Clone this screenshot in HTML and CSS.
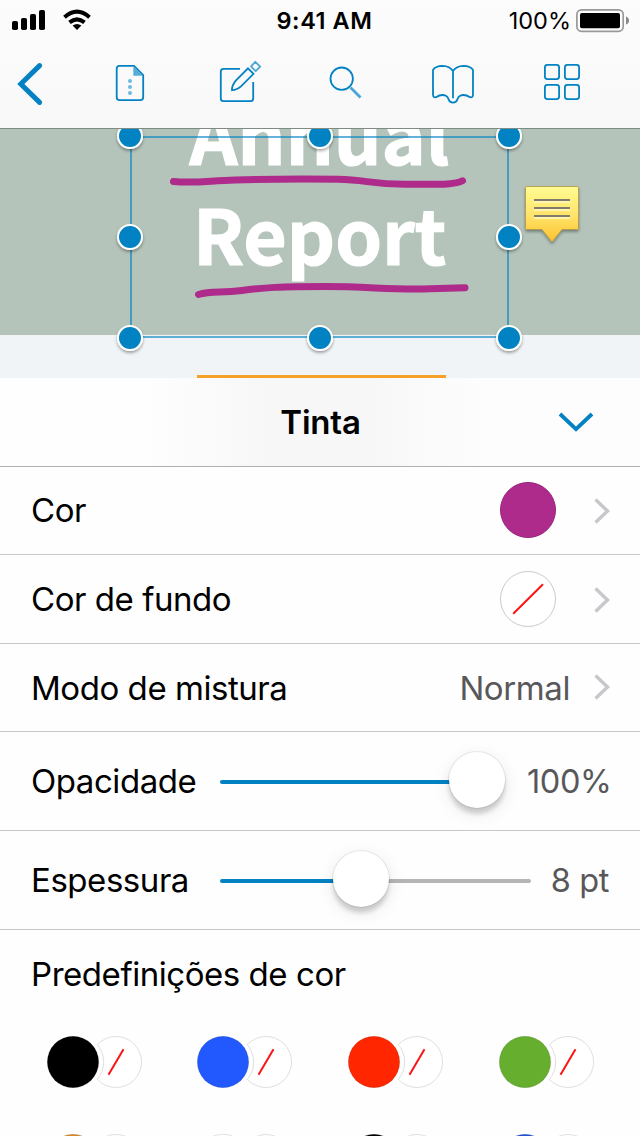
FILE: index.html
```html
<!DOCTYPE html>
<html lang="pt">
<head>
<meta charset="utf-8">
<title>Annual Report</title>
<link rel="stylesheet" href="styles.css">
</head>
<body>
<div class="screen">
  <header class="topbar">
    <div class="status">
      <div class="signal">
        <svg width="80" height="22" viewBox="12 9 80 22">
          <rect x="12" y="21" width="6" height="9" rx="1.8"/><rect x="21" y="18" width="6" height="12" rx="1.8"/><rect x="30" y="14" width="6" height="16" rx="1.8"/><rect x="39" y="10" width="6" height="20" rx="1.8"/>
          <path class="wifi-arc" d="M64.500 17.200Q77 6.200 89.500 17.200"/><path class="wifi-arc" d="M69.500 22.400Q77 16.400 84.500 22.400"/><path d="M72.600 25.500Q77 22.300 81.400 25.500L77 30Z"/>
        </svg>
      </div>
      <span class="time">9:41 AM</span>
      <div class="battery"><span class="charge">100%</span>
        <svg width="54" height="24" viewBox="576 9 54 24"><rect x="576.900" y="9.900" width="46.300" height="21.400" rx="4.500" fill="none" stroke="#999" stroke-width="1.700"/><rect x="580" y="13" width="40" height="15.300" rx="2"/><path d="M626 16.500Q629 17.500 629 20.500T626 24.500Z" fill="#888"/></svg>
      </div>
    </div>
    <nav class="tools">
      <svg class="tool" width="44" height="50" viewBox="8 58 44 50"><path d="M39.600 65.600L20.800 84L39.600 102.400" stroke-width="5" stroke-linecap="round"/></svg>
      <svg class="tool" width="44" height="50" viewBox="108 58 44 50"><path d="M119.500 65.800H134L143.200 75V97.300Q143.200 100.200 140.200 100.200H119.500Q116.700 100.200 116.700 97.300V68.700Q116.700 65.800 119.500 65.800Z"/><path d="M133.300 66V75.800H143.200Z" class="soft-fill fold"/><circle cx="130" cy="81" r="2" class="dot"/><circle cx="130" cy="87" r="2" class="dot"/><circle cx="130" cy="93" r="2" class="dot"/></svg>
      <svg class="tool" width="44" height="50" viewBox="219 58 44 50"><path d="M240 68.800H223.500Q220.800 68.800 220.800 71.500V98.500Q220.800 101.200 223.500 101.200H250.500Q253.200 101.200 253.200 98.500V82"/><path d="M248 68.300L253.500 73.800L241.500 85.800Q237 90 232 90.200Q231.600 85.500 236 80.300Z"/><path d="M251 66.300L255.300 61.800L260.200 66.600L255.700 71.200Z" class="soft" stroke-linejoin="round"/></svg>
      <svg class="tool" width="44" height="50" viewBox="323 58 44 50"><circle cx="341.700" cy="78.700" r="11.200"/><path d="M350.500 87.500L360.500 97.400" class="soft handle"/></svg>
      <svg class="tool" width="44" height="50" viewBox="431 58 44 50"><path d="M453 98.300V71Q449.700 66 442.500 65.800Q435.500 65.800 433 70V94.500Q433 97.800 436 97.200Q441.500 93.700 446 95.800C450 97.500 447 102.500 453 102.700C459 102.500 456 97.500 460 95.800Q464.500 93.700 470 97.200Q473 97.800 473 94.500V70Q470.500 65.800 463.500 65.800Q456.300 66 453 71"/></svg>
      <svg class="tool" width="44" height="50" viewBox="540 58 44 50"><rect x="544.900" y="64.900" width="14.200" height="14.200" rx="2.500"/><rect x="564.900" y="64.900" width="14.200" height="14.200" rx="2.500"/><rect x="544.900" y="84.900" width="14.200" height="14.200" rx="2.500"/><rect x="564.900" y="84.900" width="14.200" height="14.200" rx="2.500"/></svg>
    </nav>
  </header>

  <main class="document">
    <div class="cover"></div>
    <span class="title title-annual">Annual</span>
    <span class="title title-report">Report</span>
    <svg class="canvas" width="640" height="249" viewBox="0 129 640 249">
      <defs>
        <linearGradient id="note" x2="0" y2="1"><stop stop-color="#fffb91"/><stop offset=".5" stop-color="#ffe56c"/><stop offset="1" stop-color="#fdc12e"/></linearGradient>
        <filter id="shadow" x="-30%" y="-30%" width="160%" height="170%"><feDropShadow dx="0" dy="2" stdDeviation="1.500" flood-opacity=".35"/></filter>
      </defs>
      <path class="ink" d="M173.500 181.500C195 183.500 210 180.500 235 179.900S310 179 338 179.300S370 184.300 405 184.300S455 185 462.500 180.800"/>
      <path class="ink" d="M198.500 294.500C212 290 220 293.500 242 290.500S280 286.500 325 286.500S390 290 430 288.800L465 287.700"/>
      <path class="frame-halo" d="M131 335.400H508"/>
      <rect class="frame" x="131" y="137" width="377" height="200"/>
      <g class="handles" filter="url(#shadow)"><circle cx="130" cy="136" r="12"/><circle cx="320" cy="136" r="12"/><circle cx="509" cy="136" r="12"/><circle cx="130" cy="237" r="12"/><circle cx="509" cy="237" r="12"/><circle cx="130" cy="338" r="12"/><circle cx="320" cy="338" r="12"/><circle cx="509" cy="338" r="12"/></g>
      <path filter="url(#shadow)" d="M526.500 186.500H577.500Q578.500 186.500 578.500 187.500V228.500Q578.500 229.500 577.500 229.500H562L552 242L542 229.500H526.500Q525.500 229.500 525.500 228.500V187.500Q525.500 186.500 526.500 186.500Z" fill="url(#note)" stroke="#a99443" stroke-width=".8"/>
      <path d="M534 202H570M534 210H570M534 218H570" stroke="#fff4b0" stroke-width="2"/>
      <path d="M534 200H570M534 208H570M534 216H570" stroke="#807c69" stroke-width="2"/>
    </svg>
    <div class="tab-marker"></div>
  </main>

  <section class="inspector">
    <div class="panel-head"><h1>Tinta</h1>
      <svg class="collapse" width="36" height="22" viewBox="558 411 36 22"><path d="M560 414L576 429.200L592 414"/></svg>
    </div>
    <div class="row row-color"><span class="label">Cor</span><i class="well"></i><svg class="chevron" width="18" height="28" viewBox="0 0 18 28"><path d="M2.500 2.500L14.500 14L2.500 25.500"/></svg></div>
    <div class="row row-fill"><span class="label">Cor de fundo</span><svg class="well-empty" width="56" height="56" viewBox="0 0 56 56"><circle cx="28" cy="28" r="27.500"/><path d="M13.200 42.800L43 13.200"/></svg><svg class="chevron" width="18" height="28" viewBox="0 0 18 28"><path d="M2.500 2.500L14.500 14L2.500 25.500"/></svg></div>
    <div class="row row-blend"><span class="label">Modo de mistura</span><span class="value">Normal</span><svg class="chevron" width="18" height="28" viewBox="0 0 18 28"><path d="M2.500 2.500L14.500 14L2.500 25.500"/></svg></div>
    <div class="row slider-row"><span class="label">Opacidade</span><div class="slider opacity"><i class="track"></i><b class="thumb"></b></div><span class="value percent">100%</span></div>
    <div class="row slider-row"><span class="label">Espessura</span><div class="slider thickness"><i class="track"></i><b class="thumb"></b></div><span class="value points">8 pt</span></div>
    <h2 class="label presets-title">Predefinições de cor</h2>
    <svg width="0" height="0" class="symbols"><symbol id="none" viewBox="0 0 96 52"><path d="M50.300 8.700A25.500 25.500 0 1 1 50.300 43.300A26.500 26.500 0 0 0 50.300 8.700Z" fill="#fff" stroke="#c9c9cb"/><path d="M61.500 38.800L76.500 13.200" stroke="#fa1414" stroke-width="2"/></symbol></svg>
    <div class="presets">
      <svg class="preset black"><use href="#none"/><circle cx="26" cy="26" r="25.700"/></svg>
      <svg class="preset blue"><use href="#none"/><circle cx="26" cy="26" r="25.700"/></svg>
      <svg class="preset red"><use href="#none"/><circle cx="26" cy="26" r="25.700"/></svg>
      <svg class="preset green"><use href="#none"/><circle cx="26" cy="26" r="25.700"/></svg>
      <svg class="preset orange"><use href="#none"/><circle cx="26" cy="26" r="25.700"/></svg>
      <svg class="preset white"><use href="#none"/><circle cx="26" cy="26" r="25.700"/></svg>
      <svg class="preset black"><use href="#none"/><circle cx="26" cy="26" r="25.700"/></svg>
      <svg class="preset navy"><use href="#none"/><circle cx="26" cy="26" r="25.700"/></svg>
    </div>
  </section>
</div>
</body>
</html>
```
FILE: styles.css
```css
* { box-sizing: border-box; }
body { margin: 0; font-family: Inter, "Liberation Sans", sans-serif; color: #000; }
svg { display: block; flex: none; }
.screen { width: 640px; height: 1136px; overflow: hidden; background: #fefefe; display: flex; flex-direction: column; }
.topbar { flex: none; height: 129px; border-bottom: 1px solid #7d8b82; background: linear-gradient(#fcfcfc, #f8f8f8); }
.status { height: 40px; display: grid; grid-template-columns: 265px 119px 1fr; align-items: center; }
.signal { padding-left: 12px; }
.wifi-arc { fill: none; stroke: #000; stroke-width: 4; }
.time { text-align: center; font-size: 23.5px; font-weight: 600; letter-spacing: .55px; white-space: nowrap; }
.battery { display: flex; justify-content: flex-end; align-items: center; gap: 6px; padding-right: 10px; margin-top: 2px; }
.charge { font-size: 23.5px; margin-top: -1px; margin-right: -1px; }
.tools { height: 88px; display: grid; grid-template-columns: 60px 140px 82px 126px 90px 128px; justify-items: center; padding-top: 18px; }
.tool { fill: none; stroke: #0382c3; stroke-width: 1.8; }
.soft { stroke: #4aa6d6; }
.handle { stroke-width: 2.8; }
.soft-fill { fill: #5aacd8; }
.fold { stroke: none; }
.dot { fill: #70b9df; stroke: none; }
.document { position: relative; flex: none; height: 249px; background: #f0f4f6; overflow: hidden; }
.cover { height: 206px; background: #b4c4ba; }
.title { position: absolute; font: 700 75px/100px "Noto Sans CJK JP", "Open Sans", sans-serif; color: #fff; white-space: nowrap; -webkit-text-stroke: 1.2px #fff; }
.title-annual { left: 189.5px; top: -46px; }
.title-report { left: 193px; top: 54px; }
.canvas { position: absolute; left: 0; top: 0; }
.ink { fill: none; stroke: #ae2b8c; stroke-width: 7; stroke-linecap: round; }
.frame { fill: none; stroke: #0382c3; stroke-opacity: .62; stroke-width: 2; }
.frame-halo { stroke: #eef4f6; }
.handles circle { fill: #0382c3; stroke: #fff; stroke-width: 2; }
.tab-marker { position: absolute; left: 197px; bottom: 0; width: 249px; height: 3px; background: #f5a128; }
.inspector { flex: none; }
.panel-head { height: 89px; border-bottom: 1px solid #b0b0b2; display: grid; grid-template-columns: 558px 36px; align-items: center; background: linear-gradient(90deg, #fefefe 22%, #f7f7f7 42% 57%, #fdfdfd 76%); }
.panel-head h1 { margin: 0; padding-left: 83px; text-align: center; font-size: 33px; font-weight: 600; letter-spacing: -.2px; }
.collapse { fill: none; stroke: #0382c3; stroke-width: 3.8; }
.row { display: flex; align-items: center; border-bottom: 1px solid #c8c8ca; padding: 0 30px 0 31px; height: 88px; }
.row-fill { height: 89px; }
.label { font-size: 33px; font-weight: 400; letter-spacing: -.45px; white-space: nowrap; margin: 0; }
.row .label { margin-right: auto; }
.row-color .label { padding-bottom: 2px; }
.well { width: 56px; height: 56px; border-radius: 50%; background: #ae2b8c; border: 1px solid #98237a; margin-top: -1px; }
.well-empty { fill: #fff; stroke: #c9c9cb; }
.well-empty path { stroke: #fa1414; stroke-width: 2; }
.chevron { margin-left: 37px; margin-right: -1px; fill: none; stroke: #c7c7cc; stroke-width: 3.4; }
.row-fill .chevron { margin-top: 2px; }
.row-blend .chevron { margin-top: -2px; margin-left: 23px; }
.value { font-size: 33px; letter-spacing: -.4px; color: #58585a; white-space: nowrap; }
.percent { font-size: 32.5px; margin-right: -1.5px; }
.points { font-size: 32.5px; margin-right: 1px; }
.slider-row { height: 99px; position: relative; }
.slider { position: absolute; left: 220px; width: 311px; height: 57px; top: 19px; display: flex; align-items: center; }
.opacity { width: 270px; }
.track { width: 100%; height: 4px; margin-top: 5px; border-radius: 2px; background: #0382c3; }
.thickness .track { background: linear-gradient(90deg, #0382c3 45%, #b5b5b5 45%); }
.thumb { position: absolute; left: 229px; top: 1px; width: 56px; height: 56px; border-radius: 50%; background: #fff; box-shadow: 0 0 0 1px rgba(0,0,0,.07), 0 6px 4px rgba(0,0,0,.15), 0 5px 18px rgba(0,0,0,.1); }
.thickness .thumb { left: 113px; }
.presets-title { padding-left: 31px; height: 106px; line-height: 88px; }
.symbols { position: absolute; }
.presets { display: grid; grid-template-columns: repeat(4, 150.7px); grid-auto-rows: 98px; padding-left: 46.5px; }
.preset { width: 96px; height: 52px; stroke: rgba(0,0,0,.2); stroke-width: .6; }
.black { fill: #000; }
.blue { fill: #2159ff; }
.red { fill: #ff2600; }
.green { fill: #66ae2d; }
.orange { fill: #d88a29; }
.white { fill: #fff; }
.navy { fill: #244fd8; }
```
